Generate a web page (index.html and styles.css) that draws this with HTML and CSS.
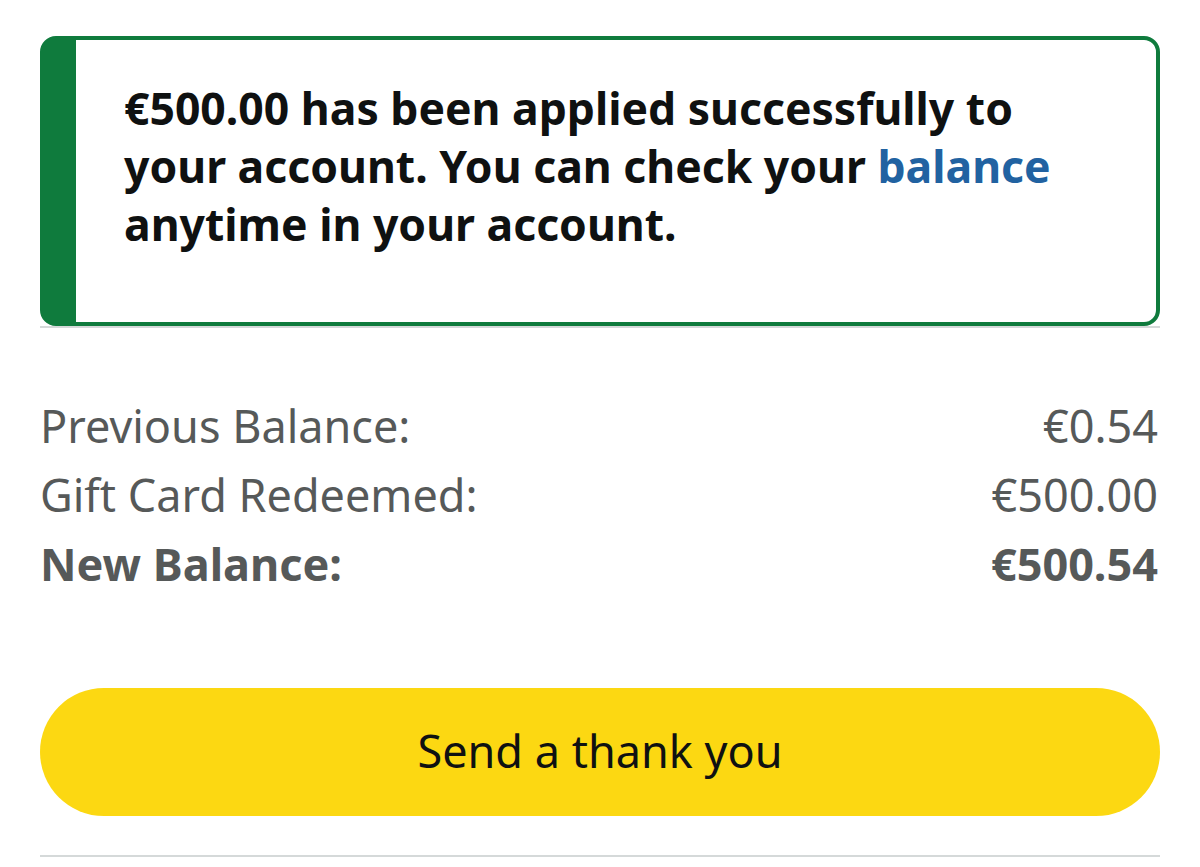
FILE: index.html
```html
<!DOCTYPE html>
<html lang="en">
<head>
<meta charset="utf-8">
<title>Gift card redeemed</title>
<link rel="stylesheet" href="styles.css">
</head>
<body>
<main class="page">
  <section class="alert">
    <p class="alert-text">€500.00 has been applied successfully to your account. You can check your <a class="link" href="#">balance</a> anytime in your account.</p>
  </section>
  <div class="divider divider-top"></div>
  <section class="summary">
    <div class="row"><span class="label">Previous Balance:</span><span class="value">€0.54</span></div>
    <div class="row"><span class="label">Gift Card Redeemed:</span><span class="value">€500.00</span></div>
    <div class="row row-total"><span class="label">New Balance:</span><span class="value">€500.54</span></div>
  </section>
  <button class="btn" type="button">Send a thank you</button>
  <div class="divider divider-bottom"></div>
</main>
</body>
</html>
```
FILE: styles.css
```css
* { box-sizing: border-box; }
html, body { margin: 0; padding: 0; background: #ffffff; }
body { font-family: "Noto Sans", "Open Sans", sans-serif; color: #0f1111; }
.page { padding: 36px 40px 0 40px; display: flex; flex-direction: column; }
.alert {
  height: 290px;
  border: 4px solid #0f7b3d;
  border-left: 36px solid #0f7b3d;
  border-radius: 16px;
  padding: 39px 40px 0 48px;
}
.alert-text {
  margin: 0;
  font-size: 44.5px;
  line-height: 58px;
  font-weight: 700;
  color: #0f1111;
}
.link { color: #2162a1; text-decoration: none; }
.divider { height: 2px; background: #d5d9d9; }
.divider-top { margin-top: 0; }
.summary { margin-top: 63px; display: flex; flex-direction: column; }
.row {
  display: flex;
  justify-content: space-between;
  align-items: baseline;
  font-size: 45px;
  line-height: 69px;
  color: #565959;
}
.value { margin-right: 2px; }
.row-total { font-weight: 700; }
.btn {
  margin-top: 90px;
  height: 128px;
  border: none;
  border-radius: 64px;
  background: #fcd812;
  font-family: "Noto Sans", "Open Sans", sans-serif;
  font-size: 45px;
  color: #0f1111;
  padding: 0 0 4px 0;
  line-height: 1;
}
.divider-bottom { margin-top: 39px; }
```
